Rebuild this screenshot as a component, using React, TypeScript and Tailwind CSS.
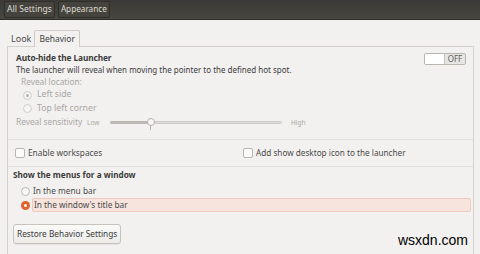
export default function App() {
  return (
    <div className="w-[480px] h-[254px] overflow-hidden bg-[#f2f1f0] font-['Noto_Sans',sans-serif] text-[#3c3c3c] relative">
      {/* Toolbar */}
      <div className="h-[20px] bg-gradient-to-b from-[#3a3935] to-[#47463f] flex items-center gap-[3px] px-[4px] border-b border-[#2e2d2a]">
        <div className="h-[17px] px-[2px] flex items-center text-[8.6px] text-[#dfdbd2] border border-[#2f2e2a] bg-[#44433d] rounded-[2px]">
          All Settings
        </div>
        <div className="h-[17px] px-[2px] flex items-center text-[8.2px] text-[#dfdbd2] border border-[#2f2e2a] bg-[#44433d] rounded-[2px]">
          Appearance
        </div>
      </div>

      {/* Tabs */}
      <div className="flex items-end pl-[8px] h-[26px]">
        <div className="px-[3px] h-[15px] text-[9px] flex items-center text-[#4c4c4c]">Look</div>
        <div className="px-[4px] h-[17px] text-[8.5px] flex items-center border border-b-0 border-[#cfccc7] rounded-t-[2px] bg-[#f2f1f0] relative top-[1px] text-[#3c3c3c]">
          Behavior
        </div>
      </div>

      {/* Panel */}
      <div className="ml-[7px] w-[467px] h-[220px] border border-[#d4d1cc] border-b-0">
        <div className="px-[8px] pt-[5px]">
          <div className="flex justify-between items-start">
            <div>
              <div className="text-[8.3px] font-bold leading-[12px] tracking-[-0.1px] text-[#3c3c3c]">Auto-hide the Launcher</div>
              <div className="text-[8px] leading-[11px] text-[#3c3c3c]">The launcher will reveal when moving the pointer to the defined hot spot.</div>
            </div>
            <div className="mt-[1px] mr-[-1px] w-[42px] h-[12px] border border-[#b9b6b0] rounded-[2px] flex overflow-hidden bg-[#e8e6e3]">
              <div className="w-[20px] h-full bg-white border-r border-[#c4c1bb]"></div>
              <div className="flex-1 text-[8px] leading-[10px] text-center text-[#5a5a5a]">OFF</div>
            </div>
          </div>

          <div className="pl-[5px] text-[#a9a7a3]">
            <div className="text-[8.3px] leading-[13px]">Reveal location:</div>
            <div className="flex items-center gap-[5px] pl-[2px] h-[14px]">
              <div className="w-[9px] h-[9px] rounded-full border border-[#d1cec9] bg-[#f5f4f2] flex items-center justify-center">
                <div className="w-[3px] h-[3px] rounded-full bg-[#b8b5b0]"></div>
              </div>
              <span className="text-[8.7px]">Left side</span>
            </div>
            <div className="flex items-center gap-[5px] pl-[2px] h-[13px]">
              <div className="w-[9px] h-[9px] rounded-full border border-[#d1cec9] bg-[#f5f4f2]"></div>
              <span className="text-[8.7px]">Top left corner</span>
            </div>
          </div>

          <div className="flex items-center h-[15px] text-[#a9a7a3]">
            <span className="text-[8.3px] w-[71px] whitespace-nowrap">Reveal sensitivity</span>
            <span className="text-[6.5px] w-[23px]">Low</span>
            <div className="relative w-[172px] h-[12px] flex items-center">
              <div className="w-full h-[3px] rounded-full bg-[#dcdad6] border border-[#cfcdc9]"></div>
              <div className="absolute left-0 w-[41px] h-[3px] rounded-full bg-[#bdbab5]"></div>
              <div className="absolute left-[37px] top-[1px] w-[8px] h-[8px] rounded-full bg-[#f7f6f4] border border-[#b5b2ad]"></div>
              <div className="absolute left-[40px] top-[9px] w-px h-[4px] bg-[#b5b2ad]"></div>
            </div>
            <span className="text-[6.5px] ml-[9px]">High</span>
          </div>
        </div>

        <div className="mt-[9px] border-t border-[#e0deda]"></div>

        <div className="flex items-center h-[26px] px-[7px]">
          <div className="flex items-center gap-[3px] w-[228px]">
            <div className="w-[10px] h-[10px] border border-[#b9b6b0] rounded-[2px] bg-[#fbfbfa]"></div>
            <span className="text-[8.3px] text-[#4a4a4a]">Enable workspaces</span>
          </div>
          <div className="flex items-center gap-[3px]">
            <div className="w-[10px] h-[10px] border border-[#b9b6b0] rounded-[2px] bg-[#fbfbfa]"></div>
            <span className="text-[8.2px] text-[#4a4a4a]">Add show desktop icon to the launcher</span>
          </div>
        </div>

        <div className="border-t border-[#e0deda]"></div>

        <div className="px-[5px] pt-[1px]">
          <div className="text-[8.2px] font-bold leading-[13px] text-[#3c3c3c]">Show the menus for a window</div>
          <div className="pl-[8px] mt-[4px]">
            <div className="flex items-center gap-[3px] h-[13px]">
              <div className="w-[9px] h-[9px] rounded-full border border-[#b9b6b0] bg-[#fbfbfa]"></div>
              <span className="text-[8.3px] text-[#4a4a4a]">In the menu bar</span>
            </div>
            <div className="flex items-center gap-[2px] h-[14px]">
              <div className="w-[9px] h-[9px] rounded-full bg-[#e0632f] flex items-center justify-center">
                <div className="w-[3px] h-[3px] rounded-full bg-white"></div>
              </div>
              <div className="flex-1 mr-[-3px] h-[14px] bg-[#f7e4dd] border border-[#efcbbd] rounded-[2px] flex items-center px-[1px]">
                <span className="text-[8.3px] text-[#4a4a4a]">In the window's title bar</span>
              </div>
            </div>
          </div>
          <button className="mt-[12px] h-[20px] px-[3px] border border-[#c6c3bd] rounded-[3px] bg-gradient-to-b from-[#fafaf9] to-[#ecebe8] text-[8.3px] text-[#3c3c3c] shadow-[0_1px_0_#e6e4e0]">
            Restore Behavior Settings
          </button>
        </div>
      </div>

      <div className="absolute right-[12px] bottom-[3px] text-[14px] text-black font-['Liberation_Sans',sans-serif]">wsxdn.com</div>
    </div>
  )
}
